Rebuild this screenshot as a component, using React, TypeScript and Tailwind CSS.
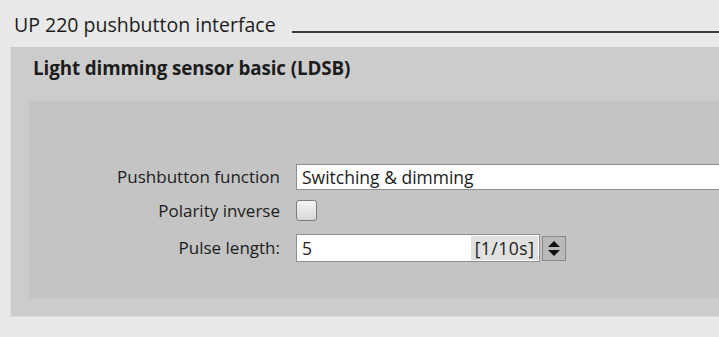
import React from 'react';

const font = { fontFamily: '"Open Sans", "Noto Sans", sans-serif' };

function Spinner() {
  return (
    <div className="ml-[2px] flex h-[25px] w-[24px] flex-col items-center justify-center gap-[3px] border border-[#8a8a8a] bg-[#b9b9b9]">
      <svg width="12" height="6" viewBox="0 0 12 6">
        <path d="M6 0 L12 6 L0 6 Z" fill="#111" />
      </svg>
      <svg width="12" height="6" viewBox="0 0 12 6">
        <path d="M0 0 L12 0 L6 6 Z" fill="#111" />
      </svg>
    </div>
  );
}

export default function App() {
  return (
    <div className="h-[337px] w-[719px] overflow-hidden bg-[#e9e9e9] text-[#1c1c1c]" style={font}>
      {/* header */}
      <div className="flex h-[38px] items-end pl-[14px]">
        <span className="text-[19.5px] leading-[26px]">UP 220 pushbutton interface</span>
        <div className="mb-[5px] ml-[16px] h-[2px] flex-1 bg-[#3c3c3c]" />
      </div>

      {/* outer panel */}
      <div className="ml-[10px] mt-[9px] h-[270px] border-b border-l border-[#dcdcdc] bg-[#cccccc] pb-[18px] pl-[18px]">
        <div className="h-[54px] pl-[4px] pt-[8px] text-[18.8px] font-bold leading-[26px] tracking-[-0.1px]">
          Light dimming sensor basic (LDSB)
        </div>

        {/* inner panel */}
        <div className="h-[197px] bg-[#c4c4c4] pt-[63px]">
          <div className="grid grid-cols-[251px_1fr] items-center gap-x-[16px] text-[17px]">
            <div className="text-right leading-[26px]">Pushbutton function</div>
            <div className="flex h-[26px] items-center border border-r-0 border-[#8f8f8f] bg-white pl-[5px] text-[17.5px]">
              Switching &amp; dimming
            </div>

            <div className="mt-[10px] text-right leading-[22px]">Polarity inverse</div>
            <div className="mt-[10px] h-[22px]">
              <div className="h-[21px] w-[21px] rounded-[3px] border border-[#7d7d7d] bg-gradient-to-b from-[#f6f6f6] to-[#d6d6d6]" />
            </div>

            <div className="mt-[12px] text-right leading-[26px]">Pulse length:</div>
            <div className="mt-[12px] flex items-center">
              <div className="flex h-[28px] w-[244px] items-stretch border border-[#8f8f8f] bg-white text-[17.5px]">
                <span className="flex flex-1 items-center pl-[5px]">5</span>
                <span className="my-[1px] mr-[1px] flex w-[67px] items-center justify-center bg-[#e1e1e1] tracking-[0.5px]">
                  [1/10s]
                </span>
              </div>
              <Spinner />
            </div>
          </div>
        </div>
      </div>
    </div>
  );
}
